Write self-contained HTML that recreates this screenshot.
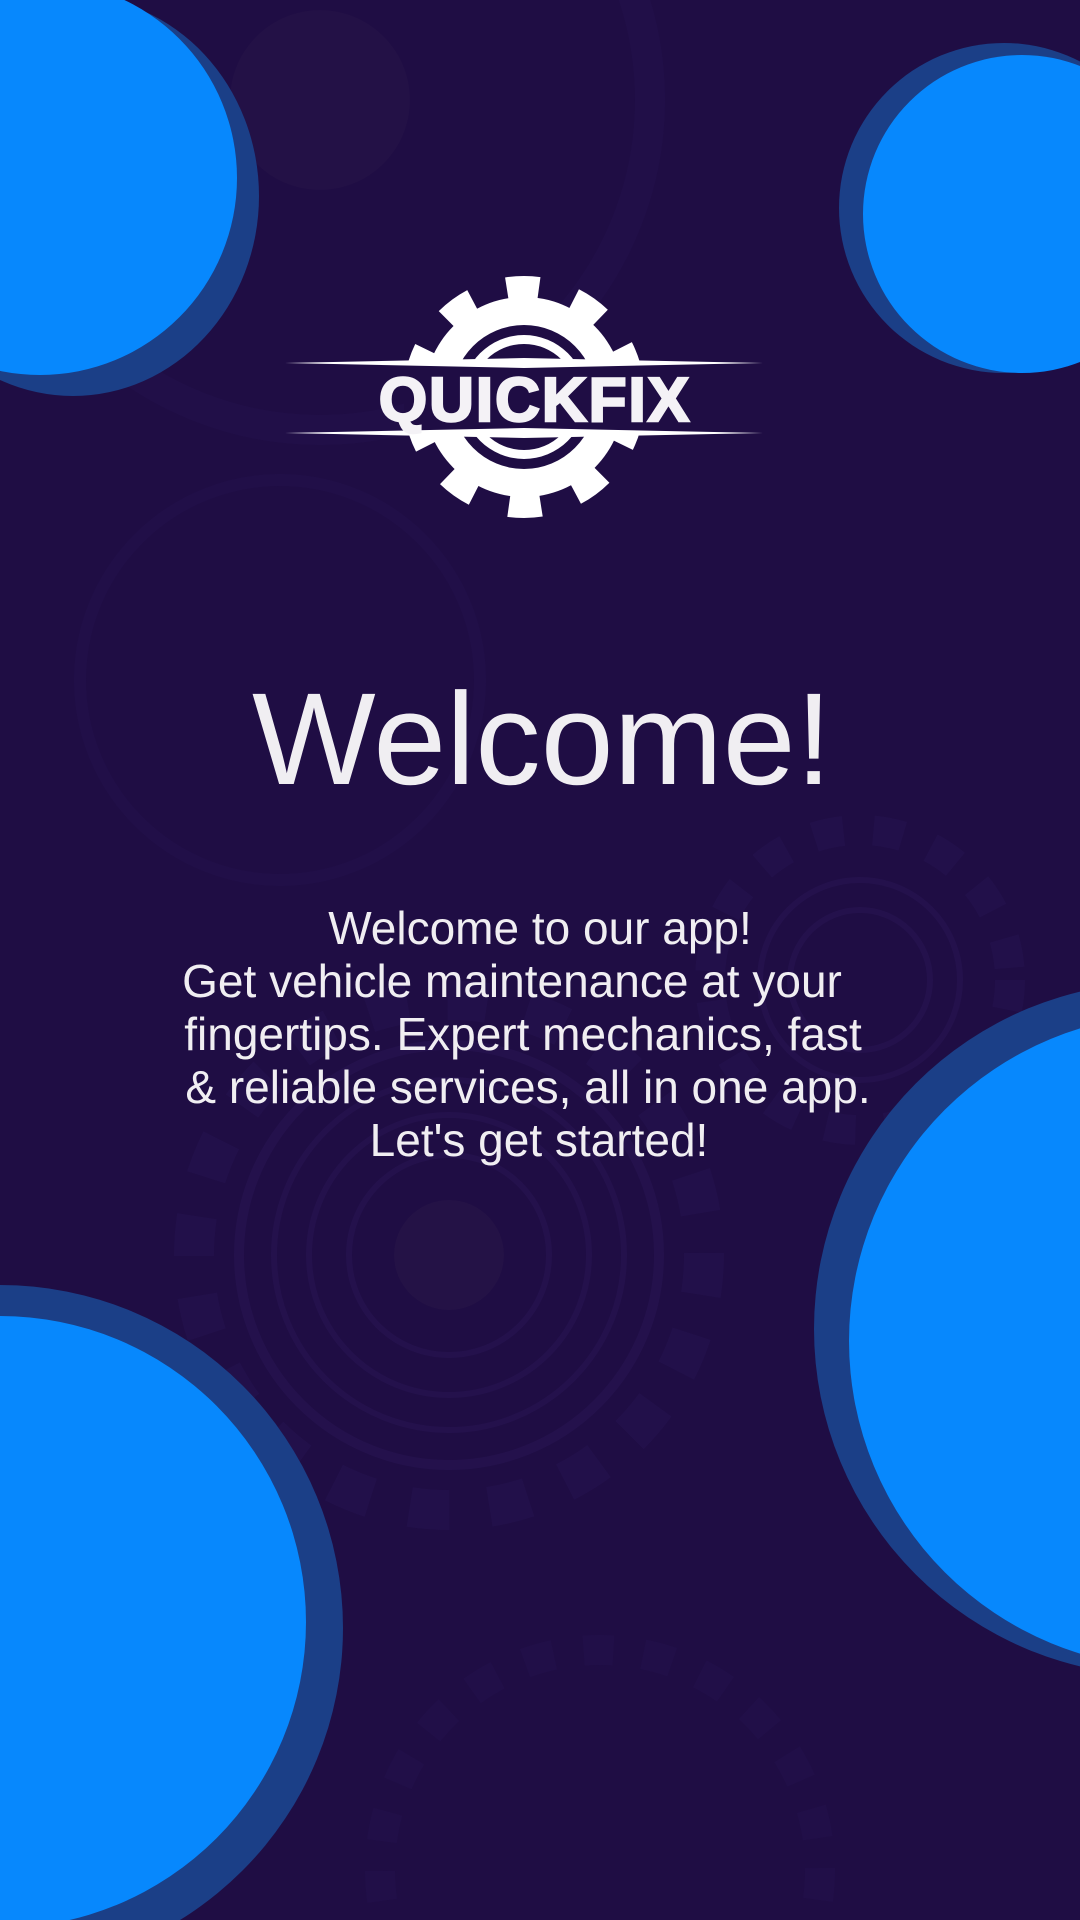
<!DOCTYPE html>
<html><head><meta charset="utf-8"><style>
html,body{margin:0;padding:0;overflow:hidden;width:1080px;height:1920px;}
body{background:#1f0d44;font-family:"Liberation Sans",Arial,sans-serif;}
#w{position:relative;width:1080px;height:1920px;overflow:hidden;background:#1f0d44;}
.c{position:absolute;border-radius:50%;}
.t{position:absolute;left:0;width:1080px;text-align:center;color:#f0eef2;}
.p div{position:absolute;width:1080px;text-align:center;height:53px;}
</style></head><body><div id="w">
<svg width="1080" height="1920" style="position:absolute;left:0;top:0" fill="none" stroke="#261450">
 <circle cx="449" cy="1255" r="255" stroke-width="40" stroke-dasharray="40 40" opacity=".5"/>
 <circle cx="449" cy="1255" r="210" stroke-width="10" opacity=".7"/>
 <circle cx="449" cy="1255" r="175" stroke-width="6" opacity=".7"/>
 <circle cx="449" cy="1255" r="140" stroke-width="6" opacity=".7"/>
 <circle cx="449" cy="1255" r="100" stroke-width="6" opacity=".7"/>
 <circle cx="449" cy="1255" r="55" fill="#241246" stroke="none"/>
 <circle cx="860" cy="980" r="150" stroke-width="30" stroke-dasharray="30 30" opacity=".5"/>
 <circle cx="860" cy="980" r="100" stroke-width="6" opacity=".7"/>
 <circle cx="860" cy="980" r="70" stroke-width="6" opacity=".7"/>
 <circle cx="320" cy="100" r="330" stroke-width="30" opacity=".4"/>
 <circle cx="320" cy="100" r="90" fill="#231146" stroke="none"/>
 <circle cx="280" cy="680" r="200" stroke-width="12" opacity=".4"/>
 <circle cx="600" cy="1870" r="220" stroke-width="30" stroke-dasharray="30 30" opacity=".4"/>
</svg>
<div class="c" style="left:-113px;top:-4px;width:372px;height:400px;background:#1b3f87"></div>
<div class="c" style="left:-157px;top:-19px;width:394px;height:394px;background:#0788fd"></div>
<div class="c" style="left:839px;top:43px;width:330px;height:330px;background:#1b3f87"></div>
<div class="c" style="left:863px;top:55px;width:318px;height:318px;background:#0788fd"></div>
<div class="c" style="left:814px;top:982px;width:694px;height:694px;background:#1b3f87"></div>
<div class="c" style="left:849px;top:1014px;width:654px;height:654px;background:#0788fd"></div>
<div class="c" style="left:-343px;top:1285px;width:686px;height:686px;background:#1b3f87"></div>
<div class="c" style="left:-306px;top:1316px;width:612px;height:612px;background:#0788fd"></div>

<svg width="1080" height="600" style="position:absolute;left:0;top:0">
 <g transform="translate(524,397)">
  <circle r="100" fill="#fff"/>
  <circle r="109" fill="none" stroke="#fff" stroke-width="24" stroke-dasharray="32 36.5" transform="rotate(-99)"/>
  <circle r="72" fill="#1f0d44"/>
  <circle r="62" fill="#fff"/>
  <circle r="53" fill="#1f0d44"/>
  <rect x="-120" y="-34" width="240" height="68" fill="#1f0d44"/>
 </g>
 <polygon points="285,363 524,358 763,363 524,368" fill="#fff"/>
 <polygon points="285,433 524,428 763,433 524,438" fill="#fff"/>
 <text x="535" y="421" text-anchor="middle" font-family="Liberation Sans, Arial, sans-serif" font-weight="bold" font-size="62" letter-spacing="2" fill="#f4f2f6" stroke="#f4f2f6" stroke-width="2.5">QUICKFIX</text>
</svg>

<div class="t" style="top:674px;font-size:131px;line-height:130px;left:2px">Welcome!</div>
<div class="t p" style="top:902px;font-size:46px;line-height:53px;">
 <div style="top:0;left:0">Welcome to our app!</div>
 <div style="top:53px;left:-28px">Get vehicle maintenance at your</div>
 <div style="top:106px;left:-17px">fingertips. Expert mechanics, fast</div>
 <div style="top:159px;left:-12px">&amp; reliable services, all in one app.</div>
 <div style="top:212px;left:-1px">Let's get started!</div>
</div>
</div></body></html>
